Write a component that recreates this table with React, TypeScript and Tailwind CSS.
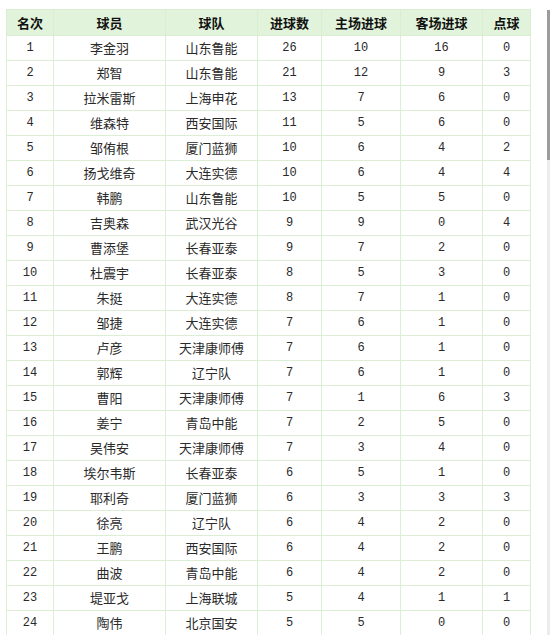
const rows: [number, string, string, number, number, number, number][] = [
  [1, "李金羽", "山东鲁能", 26, 10, 16, 0],
  [2, "郑智", "山东鲁能", 21, 12, 9, 3],
  [3, "拉米雷斯", "上海申花", 13, 7, 6, 0],
  [4, "维森特", "西安国际", 11, 5, 6, 0],
  [5, "邹侑根", "厦门蓝狮", 10, 6, 4, 2],
  [6, "扬戈维奇", "大连实德", 10, 6, 4, 4],
  [7, "韩鹏", "山东鲁能", 10, 5, 5, 0],
  [8, "吉奥森", "武汉光谷", 9, 9, 0, 4],
  [9, "曹添堡", "长春亚泰", 9, 7, 2, 0],
  [10, "杜震宇", "长春亚泰", 8, 5, 3, 0],
  [11, "朱挺", "大连实德", 8, 7, 1, 0],
  [12, "邹捷", "大连实德", 7, 6, 1, 0],
  [13, "卢彦", "天津康师傅", 7, 6, 1, 0],
  [14, "郭辉", "辽宁队", 7, 6, 1, 0],
  [15, "曹阳", "天津康师傅", 7, 1, 6, 3],
  [16, "姜宁", "青岛中能", 7, 2, 5, 0],
  [17, "吴伟安", "天津康师傅", 7, 3, 4, 0],
  [18, "埃尔韦斯", "长春亚泰", 6, 5, 1, 0],
  [19, "耶利奇", "厦门蓝狮", 6, 3, 3, 3],
  [20, "徐亮", "辽宁队", 6, 4, 2, 0],
  [21, "王鹏", "西安国际", 6, 4, 2, 0],
  [22, "曲波", "青岛中能", 6, 4, 2, 0],
  [23, "堤亚戈", "上海联城", 5, 4, 1, 1],
  [24, "陶伟", "北京国安", 5, 5, 0, 0],
];

const headers = ["名次", "球员", "球队", "进球数", "主场进球", "客场进球", "点球"];
const widths = ["w-[47px]", "w-[112px]", "w-[92px]", "w-[64px]", "w-[79px]", "w-[82px]", "w-[48px]"];

export default function App() {
  return (
    <div
      className="flex h-[635px] w-[552px] overflow-hidden bg-white"
      style={{ fontFamily: '"DejaVu Sans", "Noto Sans CJK SC", sans-serif' }}
    >
      {/* Table */}
      <div className="pl-[6px] pt-[9px]">
        <table className="w-[525px] table-fixed border-collapse">
          <thead>
            <tr className="h-[26px] bg-[#e1f3da]">
              {headers.map((h, i) => (
                <th
                  key={h}
                  className={`${widths[i]} border border-[#d9edd1] text-center text-[13px] font-bold text-[#111]`}
                  style={{ fontFamily: '"Noto Sans CJK SC", sans-serif' }}
                >
                  {h}
                </th>
              ))}
            </tr>
          </thead>
          <tbody>
            {rows.map((r) => (
              <tr key={r[0]} className="h-[25px]">
                {r.map((c, i) => (
                  <td
                    key={i}
                    className={`border border-[#dcefd5] p-0 text-center text-[#2a2a2a] ${
                      typeof c === "number" ? "text-[12px]" : "text-[13px]"
                    }`}
                    style={
                      typeof c === "number"
                        ? { fontFamily: '"Liberation Mono", monospace' }
                        : { fontFamily: '"Noto Sans CJK SC", sans-serif' }
                    }
                  >
                    {c}
                  </td>
                ))}
              </tr>
            ))}
          </tbody>
        </table>
      </div>

      {/* Scrollbar strip */}
      <div className="ml-auto flex w-[5px] flex-col pt-[10px]">
        <div className="h-[150px] w-[3px] bg-[#9c9c9c]" />
        <div className="w-[3px] flex-1 bg-[#ececec]" />
      </div>
    </div>
  );
}
